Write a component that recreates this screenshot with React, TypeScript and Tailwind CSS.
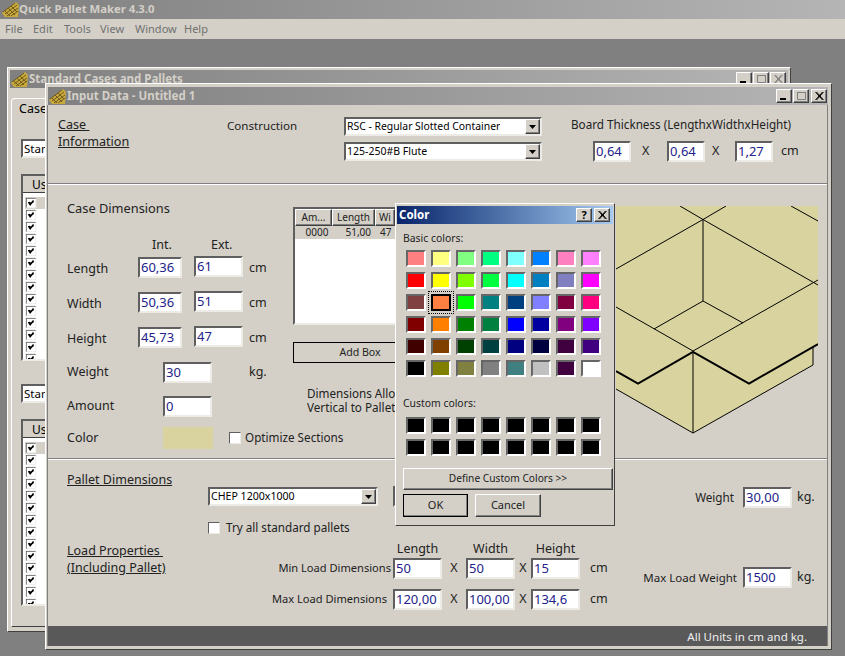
import type { ReactNode } from "react";

const BASIC_COLORS = [
  "#ff8080", "#ffff80", "#80ff80", "#00ff80", "#80ffff", "#0080ff", "#ff80c0", "#ff80ff",
  "#ff0000", "#ffff00", "#80ff00", "#00ff40", "#00ffff", "#0080c0", "#8080c0", "#ff00ff",
  "#804040", "#ff8040", "#00ff00", "#008080", "#004080", "#8080ff", "#800040", "#ff0080",
  "#800000", "#ff8000", "#008000", "#008040", "#0000ff", "#0000a0", "#800080", "#8000ff",
  "#400000", "#804000", "#004000", "#004040", "#000080", "#000040", "#400040", "#400080",
  "#000000", "#808000", "#808040", "#808080", "#408080", "#c0c0c0", "#400040", "#ffffff",
];

const RAISED =
  "bg-[#d4d0c8] border border-t-white border-l-white border-r-[#404040] border-b-[#404040] shadow-[inset_-1px_-1px_0_#808080]";
const SUNKEN =
  "border-2 border-t-[#5f5f5f] border-l-[#5f5f5f] border-r-[#ecebe6] border-b-[#ecebe6]";

function Logo() {
  return (
    <svg width="17" height="17" viewBox="0 0 17 17" className="shrink-0">
      <polygon points="0,12 14,1 17,4 16,16 3,16" fill="#c9a93c" />
      <path
        d="M1 11 L13 2 M3 13 L15 4 M5 15 L16 7 M9 15 L16 10 M6 7 L13 14 M3 10 L8 15 M9 5 L15 11"
        stroke="#6e5a1c"
        strokeWidth="1"
        fill="none"
      />
    </svg>
  );
}

function CaptionButton({ kind, dim }: { kind: "min" | "max" | "close" | "help"; dim?: boolean }) {
  const color = dim ? "#808080" : "#000000";
  if (kind === "help") {
    return (
      <div className={`${RAISED} w-[16px] h-[14px] flex items-center justify-center text-[11px] leading-[12px] font-bold text-black`}>
        ?
      </div>
    );
  }
  return (
    <div className={`${RAISED} w-[16px] h-[14px] flex items-center justify-center`}>
      <svg width="12" height="10" viewBox="0 0 12 10">
        {kind === "min" && <rect x="2" y="7" width="6" height="2" fill={color} />}
        {kind === "max" && (
          <path d="M2.5 1.5 H10.5 V8.5 H2.5 Z M2 1.5 H11" stroke="#808080" fill="none" />
        )}
        {kind === "close" && (
          <path d="M2.5 1 L9.5 9 M3.5 1 L10.5 9 M9.5 1 L2.5 9 M10.5 1 L3.5 9" stroke={color} fill="none" />
        )}
      </svg>
    </div>
  );
}

function Field({ value, w = 49 }: { value?: string; w?: number }) {
  const width = w === 44 ? "w-[44px]" : w === 38 ? "w-[38px]" : "w-[49px]";
  return (
    <div
      className={`${SUNKEN} ${width} h-[21px] shrink-0 bg-white px-[1px] text-[#22228a] text-[13px] leading-[16px] overflow-hidden whitespace-nowrap`}
    >
      {value}
    </div>
  );
}

function Select({ value, width, text }: { value: string; width: string; text: string }) {
  return (
    <div className={`${SUNKEN} ${width} h-[19px] bg-white flex items-center justify-between`}>
      <span className={`pl-[1px] ${text} leading-[15px] text-black whitespace-nowrap overflow-hidden`}>
        {value}
      </span>
      <div className={`${RAISED} w-[15px] h-[15px] shrink-0 flex items-center justify-center`}>
        <svg width="7" height="4" viewBox="0 0 7 4">
          <polygon points="0,0 7,0 3.5,4" fill="#000" />
        </svg>
      </div>
    </div>
  );
}

function CheckBox({ checked }: { checked?: boolean }) {
  return (
    <div
      className={`w-[12px] h-[12px] shrink-0 bg-white border border-t-[#5f5f5f] border-l-[#5f5f5f] border-r-[#ecebe6] border-b-[#ecebe6] flex items-center justify-center`}
    >
      {checked && (
        <svg width="8" height="8" viewBox="0 0 8 8">
          <path d="M1 3 L3 6 L7 1 M2 3 L3 5 L7 2" stroke="#000" strokeWidth="1.8" fill="none" />
        </svg>
      )}
    </div>
  );
}

function Dim({ label, a, b }: { label: string; a: string; b: string }) {
  return (
    <div className="flex items-center h-[21px] mb-[14px]">
      <div className="w-[71px] shrink-0 pt-[3px]">{label}</div>
      <Field w={44} value={a} />
      <div className="w-[12px] shrink-0" />
      <div className="-mt-[2px]">
        <Field value={b} />
      </div>
      <div className="ml-[6px] pt-[1px]">cm</div>
    </div>
  );
}

function CaseList() {
  return (
    <div className="w-[700px] h-[187px] bg-white border-2 border-t-[#5f5f5f] border-l-[#5f5f5f] border-r-[#ecebe6] border-b-[#ecebe6] overflow-hidden">
      <div className="h-[17px] bg-[#d4d0c8] border-b border-[#404040] pl-[9px] text-[12px] leading-[17px]">
        Use
      </div>
      <div className="pt-[4px] pl-[2px]">
        {Array.from({ length: 14 }).map((_, i) => (
          <div key={i} className={`h-[12px] flex items-center ${i === 0 ? "bg-[#d4d0c8]" : ""}`}>
            <div className="scale-[0.85]">
              <CheckBox checked />
            </div>
          </div>
        ))}
      </div>
    </div>
  );
}

function StandardWindow() {
  return (
    <div className="absolute left-[7px] top-[28px] w-[784px] h-[565px] bg-[#d4d0c8] border border-t-white border-l-white border-r-[#404040] border-b-[#404040] pt-[2px] px-[2px]">
      <div className="h-[18px] flex items-center justify-between bg-gradient-to-r from-[#808080] to-[#b5b5b5] pr-[1px]">
        <div className="flex items-center pl-[1px]">
          <Logo />
          <span className="text-[11.5px] font-bold text-[#d4d0c8] ml-[1px]">Standard Cases and Pallets</span>
        </div>
        <div className="flex items-center mr-[1px]">
          <CaptionButton kind="min" />
          <div className="w-[1px]" />
          <CaptionButton kind="max" dim />
          <div className="w-[1px]" />
          <CaptionButton kind="close" dim />
        </div>
      </div>
      <div className="mt-[10px] ml-[1px] h-[529px] border-l border-b border-l-white border-b-[#404040] rounded-tl-[4px] border-t border-t-white pl-[9px]">
        <div className="pt-[1px] -ml-[2px] text-[12.5px]">Cases</div>
        <div className="mt-[20px] mb-[16px]">
          <Select value="Standard" width="w-[300px]" text="text-[11.5px]" />
        </div>
        <CaseList />
        <div className="mt-[23px] mb-[16px]">
          <Select value="Standard" width="w-[300px]" text="text-[11.5px]" />
        </div>
        <CaseList />
      </div>
    </div>
  );
}

function BoxDrawing() {
  return (
    <svg width="202" height="228" viewBox="616 206 202 228" className="mt-[21px] shrink-0">
      <polygon points="616,206 818,206 818,344 813,347 813,365 693,433 616,389" fill="#d9d49f" />
      <g stroke="#000" strokeWidth="1" fill="none">
        <path d="M680 206 L703 219.5 M726 206 L703 219.5 M616 269 L703 219.5 L818 285" />
        <path d="M791 206 L818 221" />
        <path d="M703 219.5 V301 M654 329 L703 301 L743 323" />
        <path d="M616 307 L693 351 L818 280" />
        <path d="M693 352 V433 M813 347 V365 L693 433 L616 389" />
      </g>
      <path d="M616 371 L638 383.5 L693 352 L749 383.5 L818 344" stroke="#000" strokeWidth="2" fill="none" />
    </svg>
  );
}

function Swatch({ color, selected }: { color: string; selected?: boolean }) {
  return (
    <div className="relative">
      {selected && (
        <div className="absolute -left-[3px] -top-[3px] -right-[3px] -bottom-[3px] border border-dotted border-black" />
      )}
      <div
        className={`w-[20px] h-[17px] ${
          selected
            ? "border-2 border-black"
            : "border-2 border-t-[#666666] border-l-[#666666] border-r-white border-b-white"
        }`}
        style={{ backgroundColor: color }}
      />
    </div>
  );
}

function ColorDialog() {
  return (
    <div className="absolute left-[395px] top-[164px] w-[220px] h-[323px] bg-[#d4d0c8] border border-t-white border-l-white border-r-[#404040] border-b-[#404040] pt-[2px] px-[1px] text-[#222222]">
      <div className="h-[18px] flex items-center justify-between bg-gradient-to-r from-[#0a246a] to-[#a6caf0] pr-[3px]">
        <span className="pl-[2px] text-[11.5px] font-bold text-white">Color</span>
        <div className="flex items-center gap-[2px]">
          <CaptionButton kind="help" />
          <CaptionButton kind="close" />
        </div>
      </div>
      <div className="pl-[6px] pr-[1px]">
        <div className="mt-[7px] text-[10.4px] leading-[14px]">Basic colors:</div>
        <div className="mt-[5px] ml-[3px] grid grid-cols-[repeat(8,20px)] gap-x-[5px] gap-y-[5px]">
          {BASIC_COLORS.map((c, i) => (
            <Swatch key={i} color={c} selected={i === 17} />
          ))}
        </div>
        <div className="mt-[19px] text-[10.4px] leading-[14px]">Custom colors:</div>
        <div className="mt-[7px] ml-[3px] grid grid-cols-[repeat(8,20px)] gap-x-[5px] gap-y-[5px]">
          {Array.from({ length: 16 }).map((_, i) => (
            <Swatch key={i} color="#000000" />
          ))}
        </div>
        <div className={`${RAISED} mt-[12px] h-[22px] w-[210px] flex items-center justify-center text-[10.2px]`}>
          Define Custom Colors &gt;&gt;
        </div>
        <div className="mt-[4px] flex gap-[7px]">
          <div className={`${RAISED} w-[65px] h-[23px] !border-black flex items-center justify-center text-[11px]`}>
            OK
          </div>
          <div className={`${RAISED} w-[66px] h-[23px] flex items-center justify-center text-[11px]`}>Cancel</div>
        </div>
      </div>
    </div>
  );
}

function Section({ className, children }: { className: string; children: ReactNode }) {
  return <div className={`${className} border-t border-b border-t-white border-b-[#808080] flex`}>{children}</div>;
}

function InputWindow() {
  return (
    <div className="absolute left-[45px] top-[44px] w-[787px] h-[567px] bg-[#d4d0c8] border border-t-white border-l-white border-r-[#404040] border-b-[#404040] pt-[3px] pl-[1px] pr-[3px] text-[#222222] text-[12.5px]">
      <div className="ml-[1px] h-[18px] flex items-center justify-between bg-gradient-to-r from-[#808080] to-[#b5b5b5] pr-[1px]">
        <div className="flex items-center pl-[1px]">
          <Logo />
          <span className="text-[11.5px] font-bold text-[#d4d0c8] ml-[1px]">Input Data - Untitled 1</span>
        </div>
        <div className="flex items-center">
          <CaptionButton kind="min" />
          <div className="w-[1px]" />
          <CaptionButton kind="max" dim />
          <div className="w-[2px]" />
          <CaptionButton kind="close" />
        </div>
      </div>

      <div className="border-l border-r border-[#808080]">
        {/* case information */}
        <div className="h-[79px] border-b border-[#808080] flex">
          <div className="w-[179px] shrink-0 pl-[10px] pt-[11px] text-[12.6px] leading-[17px]">
            <div className="underline whitespace-pre">{"Case "}</div>
            <div className="underline">Information</div>
          </div>
          <div className="w-[117px] shrink-0 pt-[12px] text-[11.6px]">Construction</div>
          <div className="w-[198px] shrink-0 pt-[12px] flex flex-col gap-[6px]">
            <Select value="RSC - Regular Slotted Container" width="w-[198px]" text="text-[10.4px]" />
            <Select value="125-250#B Flute" width="w-[198px]" text="text-[10.5px]" />
          </div>
          <div className="ml-[29px] pt-[11px]">
            <div className="text-[11.7px]">Board Thickness (LengthxWidthxHeight)</div>
            <div className="mt-[7px] ml-[22px] flex items-center">
              <Field w={38} value="0,64" />
              <span className="w-[36px] pl-[11px]">X</span>
              <Field w={38} value="0,64" />
              <span className="w-[30px] pl-[7px]">X</span>
              <Field w={38} value="1,27" />
              <span className="ml-[8px]">cm</span>
            </div>
          </div>
        </div>

        {/* case dimensions */}
        <Section className="h-[275px]">
          <div className="w-[245px] pl-[19px] pt-[15px] shrink-0">
            <div className="h-[16px] leading-[16px] text-[12.8px]">Case Dimensions</div>
            <div className="mt-[21px] h-[16px] flex leading-[16px] pl-[85px]">
              <span className="w-[59px]">Int.</span>
              <span>Ext.</span>
            </div>
            <div className="mt-[4px]">
              <Dim label="Length" a="60,36" b="61" />
              <Dim label="Width" a="50,36" b="51" />
              <Dim label="Height" a="45,73" b="47" />
            </div>
            <div className="flex items-center h-[21px]">
              <div className="w-[96px] shrink-0">Weight</div>
              <Field value="30" />
              <div className="ml-[37px]">kg.</div>
            </div>
            <div className="flex items-center h-[21px] mt-[13px]">
              <div className="w-[96px] shrink-0">Amount</div>
              <Field value="0" />
            </div>
            <div className="flex items-center h-[22px] mt-[10px]">
              <div className="w-[96px] shrink-0">Color</div>
              <div className="w-[50px] h-[22px] shrink-0 bg-[#d9d49f]" />
              <div className="ml-[16px]">
                <CheckBox />
              </div>
              <div className="ml-[4px] whitespace-nowrap text-[11.7px]">Optimize Sections</div>
            </div>
          </div>
          <div className="w-[323px] shrink-0 pt-[22px]">
            <div className="w-[102px] h-[118px] bg-white border-2 border-r-0 border-t-[#5f5f5f] border-l-[#5f5f5f] border-b-[#ecebe6] overflow-hidden text-[10px]">
              <div className="flex h-[17px]">
                <div className={`${RAISED} w-[37px] shrink-0 flex items-center justify-center`}>Am...</div>
                <div className={`${RAISED} w-[43px] shrink-0 flex items-center justify-center`}>Length</div>
                <div className={`${RAISED} w-[20px] shrink-0 overflow-hidden pl-[3px] leading-[15px]`}>Wi</div>
              </div>
              <div className="flex h-[13px] bg-[#d4d0c8] leading-[13px] text-[10px]">
                <div className="w-[44px] text-center">0000</div>
                <div className="w-[32px] text-right">51,00</div>
                <div className="ml-[9px]">47</div>
              </div>
            </div>
            <div className="mt-[17px] w-[134px] h-[21px] border border-black flex items-center justify-center text-[10.6px]">
              Add Box
            </div>
            <div className="mt-[23px] ml-[14px] w-[88px] overflow-hidden leading-[14px] text-[11.7px] whitespace-nowrap">
              <div>Dimensions Allowed</div>
              <div>Vertical to Pallet</div>
            </div>
          </div>
          <BoxDrawing />
        </Section>

        {/* pallet and load */}
        <div className="h-[167px] border-t border-white flex">
          <div className="w-[160px] shrink-0 pl-[19px] pt-[12px]">
            <div className="h-[16px] leading-[16px] underline whitespace-nowrap">Pallet Dimensions</div>
            <div className="mt-[54px] leading-[17px]">
              <div className="underline whitespace-pre">{"Load Properties "}</div>
              <div className="underline">(Including Pallet)</div>
            </div>
          </div>
          <div className="w-[434px] shrink-0">
            <div className="mt-[27px] flex items-start">
              <Select value="CHEP 1200x1000" width="w-[170px]" text="text-[10.6px]" />
              <div className="ml-[15px] -mt-[1px]">
                <Field value="" />
              </div>
            </div>
            <div className="mt-[15px] h-[12px] flex items-center">
              <CheckBox />
              <span className="ml-[6px] whitespace-nowrap text-[11.7px]">Try all standard pallets</span>
            </div>
            <div className="mt-[7px] grid grid-cols-[185px_49px_24px_49px_16px_49px_40px] items-center">
              <div className="h-[16px]" />
              <div className="h-[17px] text-center leading-[16px]">Length</div>
              <div />
              <div className="h-[17px] text-center leading-[16px]">Width</div>
              <div />
              <div className="h-[17px] text-center leading-[16px]">Height</div>
              <div />

              <div className="text-right pr-[2px] whitespace-nowrap text-[11.1px]">Min Load Dimensions</div>
              <Field value="50" />
              <div className="text-center">X</div>
              <Field value="50" />
              <div className="text-center">X</div>
              <Field value="15" />
              <div className="pl-[10px]">cm</div>

              <div className="mt-[10px] text-right pr-[6px] whitespace-nowrap text-[11.1px]">Max Load Dimensions</div>
              <div className="mt-[10px]">
                <Field value="120,00" />
              </div>
              <div className="mt-[10px] text-center">X</div>
              <div className="mt-[10px]">
                <Field value="100,00" />
              </div>
              <div className="mt-[10px] text-center">X</div>
              <div className="mt-[10px]">
                <Field value="134,6" />
              </div>
              <div className="mt-[10px] pl-[10px]">cm</div>
            </div>
          </div>
          <div className="flex-1">
            <div className="mt-[27px] flex items-center h-[21px]">
              <div className="w-[92px] shrink-0 text-right text-[11.7px]">Weight</div>
              <div className="ml-[9px]">
                <Field value="30,00" />
              </div>
              <div className="ml-[5px]">kg.</div>
            </div>
            <div className="mt-[59px] flex items-center h-[21px]">
              <div className="w-[95px] shrink-0 text-right whitespace-nowrap text-[11.5px]">Max Load Weight</div>
              <div className="ml-[6px]">
                <Field value="1500" />
              </div>
              <div className="ml-[5px]">kg.</div>
            </div>
          </div>
        </div>

        <div className="h-[20px] bg-[#595959] text-[#f0f0f0] text-right pr-[20px] leading-[21px] text-[11.5px]">
          All Units in cm and kg.
        </div>
      </div>
    </div>
  );
}

export default function App() {
  const menus = [
    { label: "File", w: "w-[28px]" },
    { label: "Edit", w: "w-[31px]" },
    { label: "Tools", w: "w-[36px]" },
    { label: "View", w: "w-[35px]" },
    { label: "Window", w: "w-[49px]" },
    { label: "Help", w: "w-[30px]" },
  ];
  return (
    <div className="w-[845px] h-[656px] overflow-hidden flex flex-col bg-[#808080] font-['Noto_Sans',sans-serif]">
      <div className="h-[19px] shrink-0 flex items-center pl-[2px] bg-gradient-to-r from-[#808080] to-[#b5b5b5]">
        <Logo />
        <span className="text-[11.3px] font-bold text-[#d4d0c8]">Quick Pallet Maker 4.3.0</span>
      </div>
      <div className="h-[20px] shrink-0 bg-[#d4d0c8] flex items-center pl-[5px] text-[11px] text-[#707070]">
        {menus.map((m) => (
          <div key={m.label} className={`${m.w} shrink-0`}>
            {m.label}
          </div>
        ))}
      </div>
      <div className="relative flex-1">
        <StandardWindow />
        <InputWindow />
        <ColorDialog />
      </div>
    </div>
  );
}
